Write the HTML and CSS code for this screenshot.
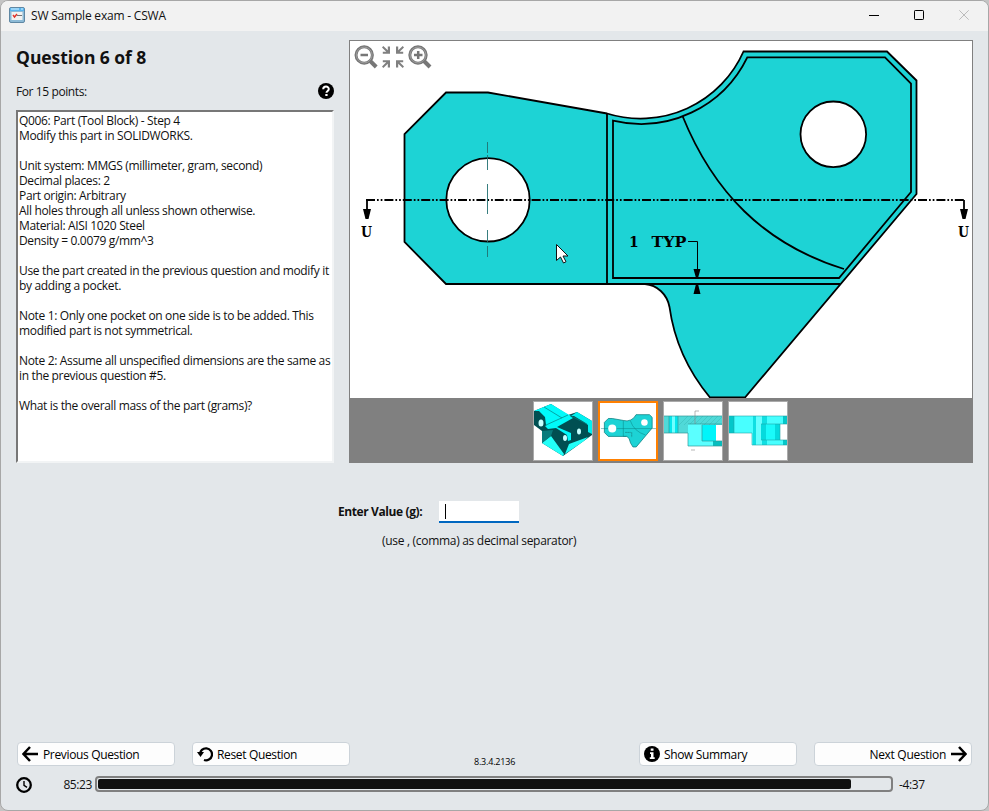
FILE: index.html
```
<!DOCTYPE html>
<html lang="en">
<head>
<meta charset="utf-8">
<title>SW Sample exam - CSWA</title>
<link rel="stylesheet" href="styles.css">
</head>
<body>
<div class="window">
  <header class="titlebar">
    <svg class="app-icon" width="16" height="16" viewBox="0 0 16 16"><rect x=".5" y=".5" width="15" height="15" rx="1.5" fill="#8dbad6" stroke="#5f87a3"/><path d="M1 1h14v3H1z" fill="#58b5ef"/><path d="M2 2h8M12 2h2" stroke="#d8f2ff"/><path d="M2.500 5h11v8h-11z" fill="#f2f2f0"/><path d="M8 8.500h5" stroke="#717579" stroke-width="1.200"/><path d="M4 8l1.500 2L8 7" fill="none" stroke="#e03329" stroke-width="1.400"/></svg>
    <span class="title">SW Sample exam - CSWA</span>
    <div class="controls">
      <svg width="10" height="10"><path d="M0 5.500h10" stroke="#000"/></svg>
      <svg width="10" height="10"><rect x=".5" y=".5" width="9" height="9" rx=".7" fill="none" stroke="#000"/></svg>
      <svg width="10" height="10"><path d="M.3.3l9.400 9.400M9.700.3L.3 9.700" stroke="#bcbcbc"/></svg>
    </div>
  </header>

  <main class="content">
    <section class="question">
      <h1>Question 6 of 8</h1>
      <div class="points"><span>For 15 points:</span>
        <svg width="16" height="16" viewBox="0 0 16 16"><circle cx="8" cy="8" r="8"/><path d="M5.200 6.200C5.300 2.700 10.800 2.800 10.800 6c0 1.900-2.300 1.900-2.300 3.800" fill="none" stroke="#fff" stroke-width="2"/><path d="M7.300 11h2.300v2H7.300z" fill="#fff"/></svg>
      </div>
      <div class="statement">Q006: Part (Tool Block) - Step 4
Modify this part in SOLIDWORKS.

Unit system: MMGS (millimeter, gram, second)
Decimal places: 2
Part origin: Arbitrary
All holes through all unless shown otherwise.
Material: AISI 1020 Steel
Density = 0.0079 g/mm^3

Use the part created in the previous question and modify it
by adding a pocket.

Note 1: Only one pocket on one side is to be added. This
modified part is not symmetrical.

Note 2: Assume all unspecified dimensions are the same as
in the previous question #5.

What is the overall mass of the part (grams)?</div>
    </section>

    <section class="viewer">
      <svg class="drawing" width="622" height="357" viewBox="350 41 622 357">
        <defs>
          <g id="lens"><circle cx="9.500" cy="10" r="8.200" fill="#fff" stroke="#777" stroke-width="3"/><circle cx="9.500" cy="10" r="7.900" fill="none" stroke="#a4a4a4" stroke-width=".8"/><path d="M15.500 16l6 6" stroke="#777" stroke-width="4"/></g>
          <path id="corner" d="M0 1.500L1.300 0L5.800 4.200V.5H8V7.800H.8V5.800H4.300Z" fill="#808080"/>
        </defs>
        <path d="M446 92.500H488L607 113.500A112.700 112.700 0 0 0 743.500 51.500H887L916.500 80.500V194L745 397.500H710C688 371 674 340 669.500 307C667 294 657 285 645 284H446L404.500 242V134Z" fill="#1dd3d5" stroke="#000" stroke-width="1.800"/>
        <g fill="none" stroke="#000" stroke-width="1.800">
          <path d="M607 113V284M640 284H840"/>
          <path d="M613 120.700A118.500 118.500 0 0 0 747.300 57.300H885L911 83.500V192L839 278H613Z"/>
          <path d="M682.500 116C713 191 763 244 844 269"/>
          <g fill="#fff"><circle cx="488" cy="199.800" r="41.700"/><circle cx="833.300" cy="134.300" r="32.800"/></g>
          <path d="M366 200H965" stroke-dasharray="9 2 1.700 2 1.700 2"/>
          <path d="M367 200v12M964 200v12"/>
        </g>
        <path d="M487.500 142v11M487.500 155v15M487.500 184v30M487.500 230v13M487.500 246v11" stroke="#206f70" stroke-width=".9"/>
        <path d="M363 209h8l-2.500 10h-3zM960 209h8l-2.500 10h-3zM693.500 269h7l-2.500 9h-2zM693.500 294h7l-2.500-10h-2z"/>
        <path d="M688 241.500h9.500V278" fill="none" stroke="#000"/>
        <g class="labels"><text x="629" y="247">1 <tspan x="651.500" textLength="35" lengthAdjust="spacingAndGlyphs">TYP</tspan></text><text x="361" y="237" textLength="11" lengthAdjust="spacingAndGlyphs">U</text><text x="958" y="237" textLength="11" lengthAdjust="spacingAndGlyphs">U</text></g>
        <use href="#lens" x="354.700" y="45"/><path d="M360.500 55h7.500" stroke="#777" stroke-width="2.500"/>
        <use href="#lens" x="408.500" y="45"/><path d="M414 55h8.500M418.200 51v8" stroke="#777" stroke-width="2.500"/>
        <use href="#corner" transform="translate(382 46)"/><use href="#corner" transform="translate(404 46) scale(-1 1)"/><use href="#corner" transform="translate(382 68) scale(1 -1)"/><use href="#corner" transform="translate(404 68) scale(-1 -1)"/>
        <path d="M556.500 244.500v16l4-3.500 3 6 2.500-1.300-3-5.700h5z" fill="#fff" stroke="#111"/>
      </svg>
      <div class="thumbs">
        <div class="thumb"><svg viewBox="0 0 58 58"><path d="M0 9L17 2 34 13 43 10 58 19V33L29 54 8 41V29L0 23Z" fill="#004f52"/><path d="M0 9L17 2 37 14 17 26 12 23 11 15 5 9Z" fill="#00fafa"/><path d="M37 14L43 10 58 19V32L54 30V23L50 20 40 14Z" fill="#00f0f0"/><path d="M11 24L34 13 39 16 23 25 37 31V38L34 39 33 33 22 26 14 27Z" fill="#00fafa"/><path d="M8 41L17 34 30 52 29 54ZM31 52L35 42 54 35 50 39Z" fill="#22fff8"/><path d="M8 29V41L17 34 19 28Z" fill="#087b7c"/><path d="M10 5l18 11M12 23l22-10M37 14l16 8" fill="none" stroke="#067e80" stroke-width=".7"/><g fill="#c6ffff"><ellipse cx="7" cy="21" rx="2.500" ry="3.500"/><ellipse cx="45" cy="29.500" rx="2" ry="3"/><ellipse cx="31" cy="36" rx="2" ry="3"/></g></svg></div>
        <div class="thumb selected"><svg viewBox="357 11 600 430"><path d="M446 92H488L607 113A113 113 0 0 0 743 51H887L916 80V194L745 397H710Q680 360 669 307L645 284H446L404 242V134Z" fill="#1dd3d5" stroke="#087d7e" stroke-width="8"/><path d="M607 113V284H640M682 116Q720 230 844 269M367 200H964" fill="none" stroke="#087d7e" stroke-width="5"/><g fill="#fff"><circle cx="488" cy="200" r="43"/><circle cx="833" cy="134" r="35"/></g><path d="M629 241h55M697 241v50" stroke="#176e6f" stroke-width="8" stroke-dasharray="14 8"/></svg></div>
        <div class="thumb"><svg viewBox="0 0 58 58"><path d="M0 14h58v9H24v8H0z" fill="#50d9d8"/><path d="M15 23L24 14m-4 9l9-9m-4 9l9-9m-4 9l9-9m-4 9l9-9m-4 9l9-9m-4 9l9-9m-4 9l9-9" stroke="#38bab9" stroke-width=".5"/><path d="M5 14h9v17H5z" fill="#04e7ed"/><path d="M8 14h3v17H8z" fill="#70ffff"/><path d="M24 22h14v17h20v5H24z" fill="#5bffff"/><path d="M38 23h14v16H38z" fill="#00f5fa"/><path d="M49 39h9v5h-9z" fill="#07bebe"/><path d="M0 14h58M0 31h24v13h34M24 22h34M38 23v16h20M5 14v17M14 14v17" fill="none" stroke="#32999a" stroke-width=".7"/><path d="M31 22V9h4M27 48h4" fill="none" stroke="#888" stroke-width=".6"/></svg></div>
        <div class="thumb"><svg viewBox="0 0 58 58"><path d="M0 14h58v8H37v16h21v5H23V31H0z" fill="#48ffff"/><path d="M0 14h5v17H0zM54 14h4v8h-4zM54 38h4v5h-4z" fill="#04c7c9"/><path d="M24 14h14v29H24z" fill="#10dfe2"/><path d="M27 14h6v29h-6z" fill="#67ffff"/><path d="M32 22h19v16H32z" fill="#05dadd"/><path d="M37 22h9v16h-9z" fill="#1afafa"/><path d="M0 14h58M0 31h23v12h35M32 22h26M32 38h26M5 14v17M51 22v16" fill="none" stroke="#20a5a7" stroke-width=".6"/></svg></div>
      </div>
    </section>
  </main>

  <section class="answer">
    <div class="answer-row"><label for="mass">Enter Value (g):</label><div class="field" id="mass"><span class="caret"></span></div></div>
    <p>(use , (comma) as decimal separator)</p>
  </section>

  <footer>
    <div class="buttons">
      <button><svg width="16" height="16" viewBox="0 0 16 16"><path d="M16 8H2M8 1L1.500 8 8 15" fill="none" stroke="#000" stroke-width="2.500"/></svg><span>Previous Question</span></button>
      <button class="reset"><svg width="16" height="16" viewBox="0 0 16 16"><path d="M3 8.500A6 6 0 1 1 7 14" fill="none" stroke="#000" stroke-width="2.300"/><path d="M0 6h7l-3.500 5z"/></svg><span>Reset Question</span></button>
      <span class="version">8.3.4.2136</span>
      <button class="summary"><svg width="16" height="16" viewBox="0 0 16 16"><circle cx="8" cy="8" r="8"/><path d="M6.700 2.500h2.800v2.300H6.700zM6 6.300h3.500v5h1.200V13H5.800v-1.700H7V8H6z" fill="#fff"/></svg><span>Show Summary</span></button>
      <button class="next"><span>Next Question</span><svg width="16" height="16" viewBox="0 0 16 16"><path d="M0 8h14M8 1l6.500 7L8 15" fill="none" stroke="#000" stroke-width="2.500"/></svg></button>
    </div>
    <div class="timer">
      <svg width="16" height="16" viewBox="0 0 16 16"><circle cx="8" cy="8" r="6.800" fill="none" stroke="#000" stroke-width="2.300"/><path d="M8 4v4.300l3 2" fill="none" stroke="#000" stroke-width="1.400"/></svg>
      <span class="elapsed">85:23</span>
      <div class="track"><div class="fill"></div></div>
      <span class="remaining">-4:37</span>
    </div>
  </footer>
</div>
</body>
</html>
```
FILE: styles.css
```
* { box-sizing: border-box; }
body {
  margin: 0;
  height: 811px;
  overflow: hidden;
  background: #c4c4c4;
  font: 12px/15px "Open Sans", "Noto Sans", sans-serif;
  letter-spacing: -0.3px;
  color: #111;
}
svg { display: block; flex: none; }
.window {
  height: 811px;
  display: flex;
  flex-direction: column;
  background: #e3e7ea;
  border: 1px solid #a7a7a7;
  border-radius: 8px;
  overflow: hidden;
}
.titlebar {
  height: 30px;
  flex: none;
  display: flex;
  align-items: center;
  padding: 0 18px 2px 8px;
  background: #f2f2f2;
}
.title { margin-left: 6px; letter-spacing: -0.2px; }
.controls { display: flex; gap: 35px; margin: 0 1px 0 auto; }
.content { display: flex; height: 432px; padding: 9px 15px 0; gap: 15px; }
.question { width: 318px; flex: none; }
h1 {
  margin: 6px 0 0;
  font-size: 17.5px;
  line-height: 22px;
  font-weight: 700;
  letter-spacing: -0.05px;
}
.points {
  display: flex;
  justify-content: space-between;
  height: 20px;
  margin-top: 13px;
  align-items: center;
}
.points svg { margin-top: -1px; }
.points span { letter-spacing: -0.4px; }
.statement {
  height: 353px;
  margin-top: 9px;
  padding: 1px 0 0 1px;
  background: #fff;
  border: 2px solid;
  border-color: #777 #f2f4f5 #f2f4f5 #777;
  white-space: pre;
  letter-spacing: -0.34px;
}
.viewer {
  width: 624px;
  height: 423px;
  border: 1px solid #808080;
  background: #fff;
}
.labels { font: 700 14px "DejaVu Serif", serif; letter-spacing: 0; }
.thumbs {
  height: 64px;
  background: #808080;
  display: flex;
  gap: 5px;
  padding: 3px 0 0 183px;
}
.thumb { width: 60px; height: 60px; background: #fff; border: 1px solid #aaa; }
.thumb svg { width: 100%; height: 100%; }
.thumb.selected { border: 2px solid #ff8000; }
.answer { padding-top: 38px; }
.answer-row { display: flex; align-items: center; padding-left: 337px; }
.answer-row label { width: 101px; margin-top: -2px; font-weight: 700; letter-spacing: -0.4px; }
.field {
  width: 80px;
  height: 22px;
  padding: 3px 6px;
  background: #fff;
  border-bottom: 2px solid #0067c0;
}
.caret { display: block; width: 1px; height: 15px; background: #000; }
.answer p { margin: 10px 0 0 381px; }
footer { margin-top: auto; height: 68px; }
.buttons { display: flex; padding: 0 16px; }
button {
  width: 158px;
  height: 24px;
  flex: none;
  display: flex;
  align-items: center;
  gap: 5px;
  padding: 0 4px;
  font: inherit;
  letter-spacing: -0.35px;
  color: #000;
  background: #fdfdfd;
  border: 1px solid #ccd3d9;
  border-radius: 4px;
}
.reset { margin-left: 17px; gap: 4px; }
.summary { margin-left: auto; gap: 4px; }
.next { margin-left: 17px; justify-content: flex-end; letter-spacing: -0.3px; }
.version { margin: 12px 0 0 124px; font-size: 9px; line-height: 15px; letter-spacing: -0.2px; color: #000; }
.timer { display: flex; align-items: center; height: 18px; margin-top: 7px; padding-left: 15px; }
.elapsed { width: 60px; text-align: right; letter-spacing: -0.4px; }
.timer svg, .timer span { margin-top: -1px; }
.track {
  width: 798px;
  height: 16px;
  margin: -2px 0 0 3px;
  padding: 1px;
  border: 2px solid #808080;
  border-radius: 4px;
}
.fill { width: 753px; height: 10px; border-radius: 2px; background: #101010; }
.remaining { margin-left: 6px; letter-spacing: -0.4px; }
```
